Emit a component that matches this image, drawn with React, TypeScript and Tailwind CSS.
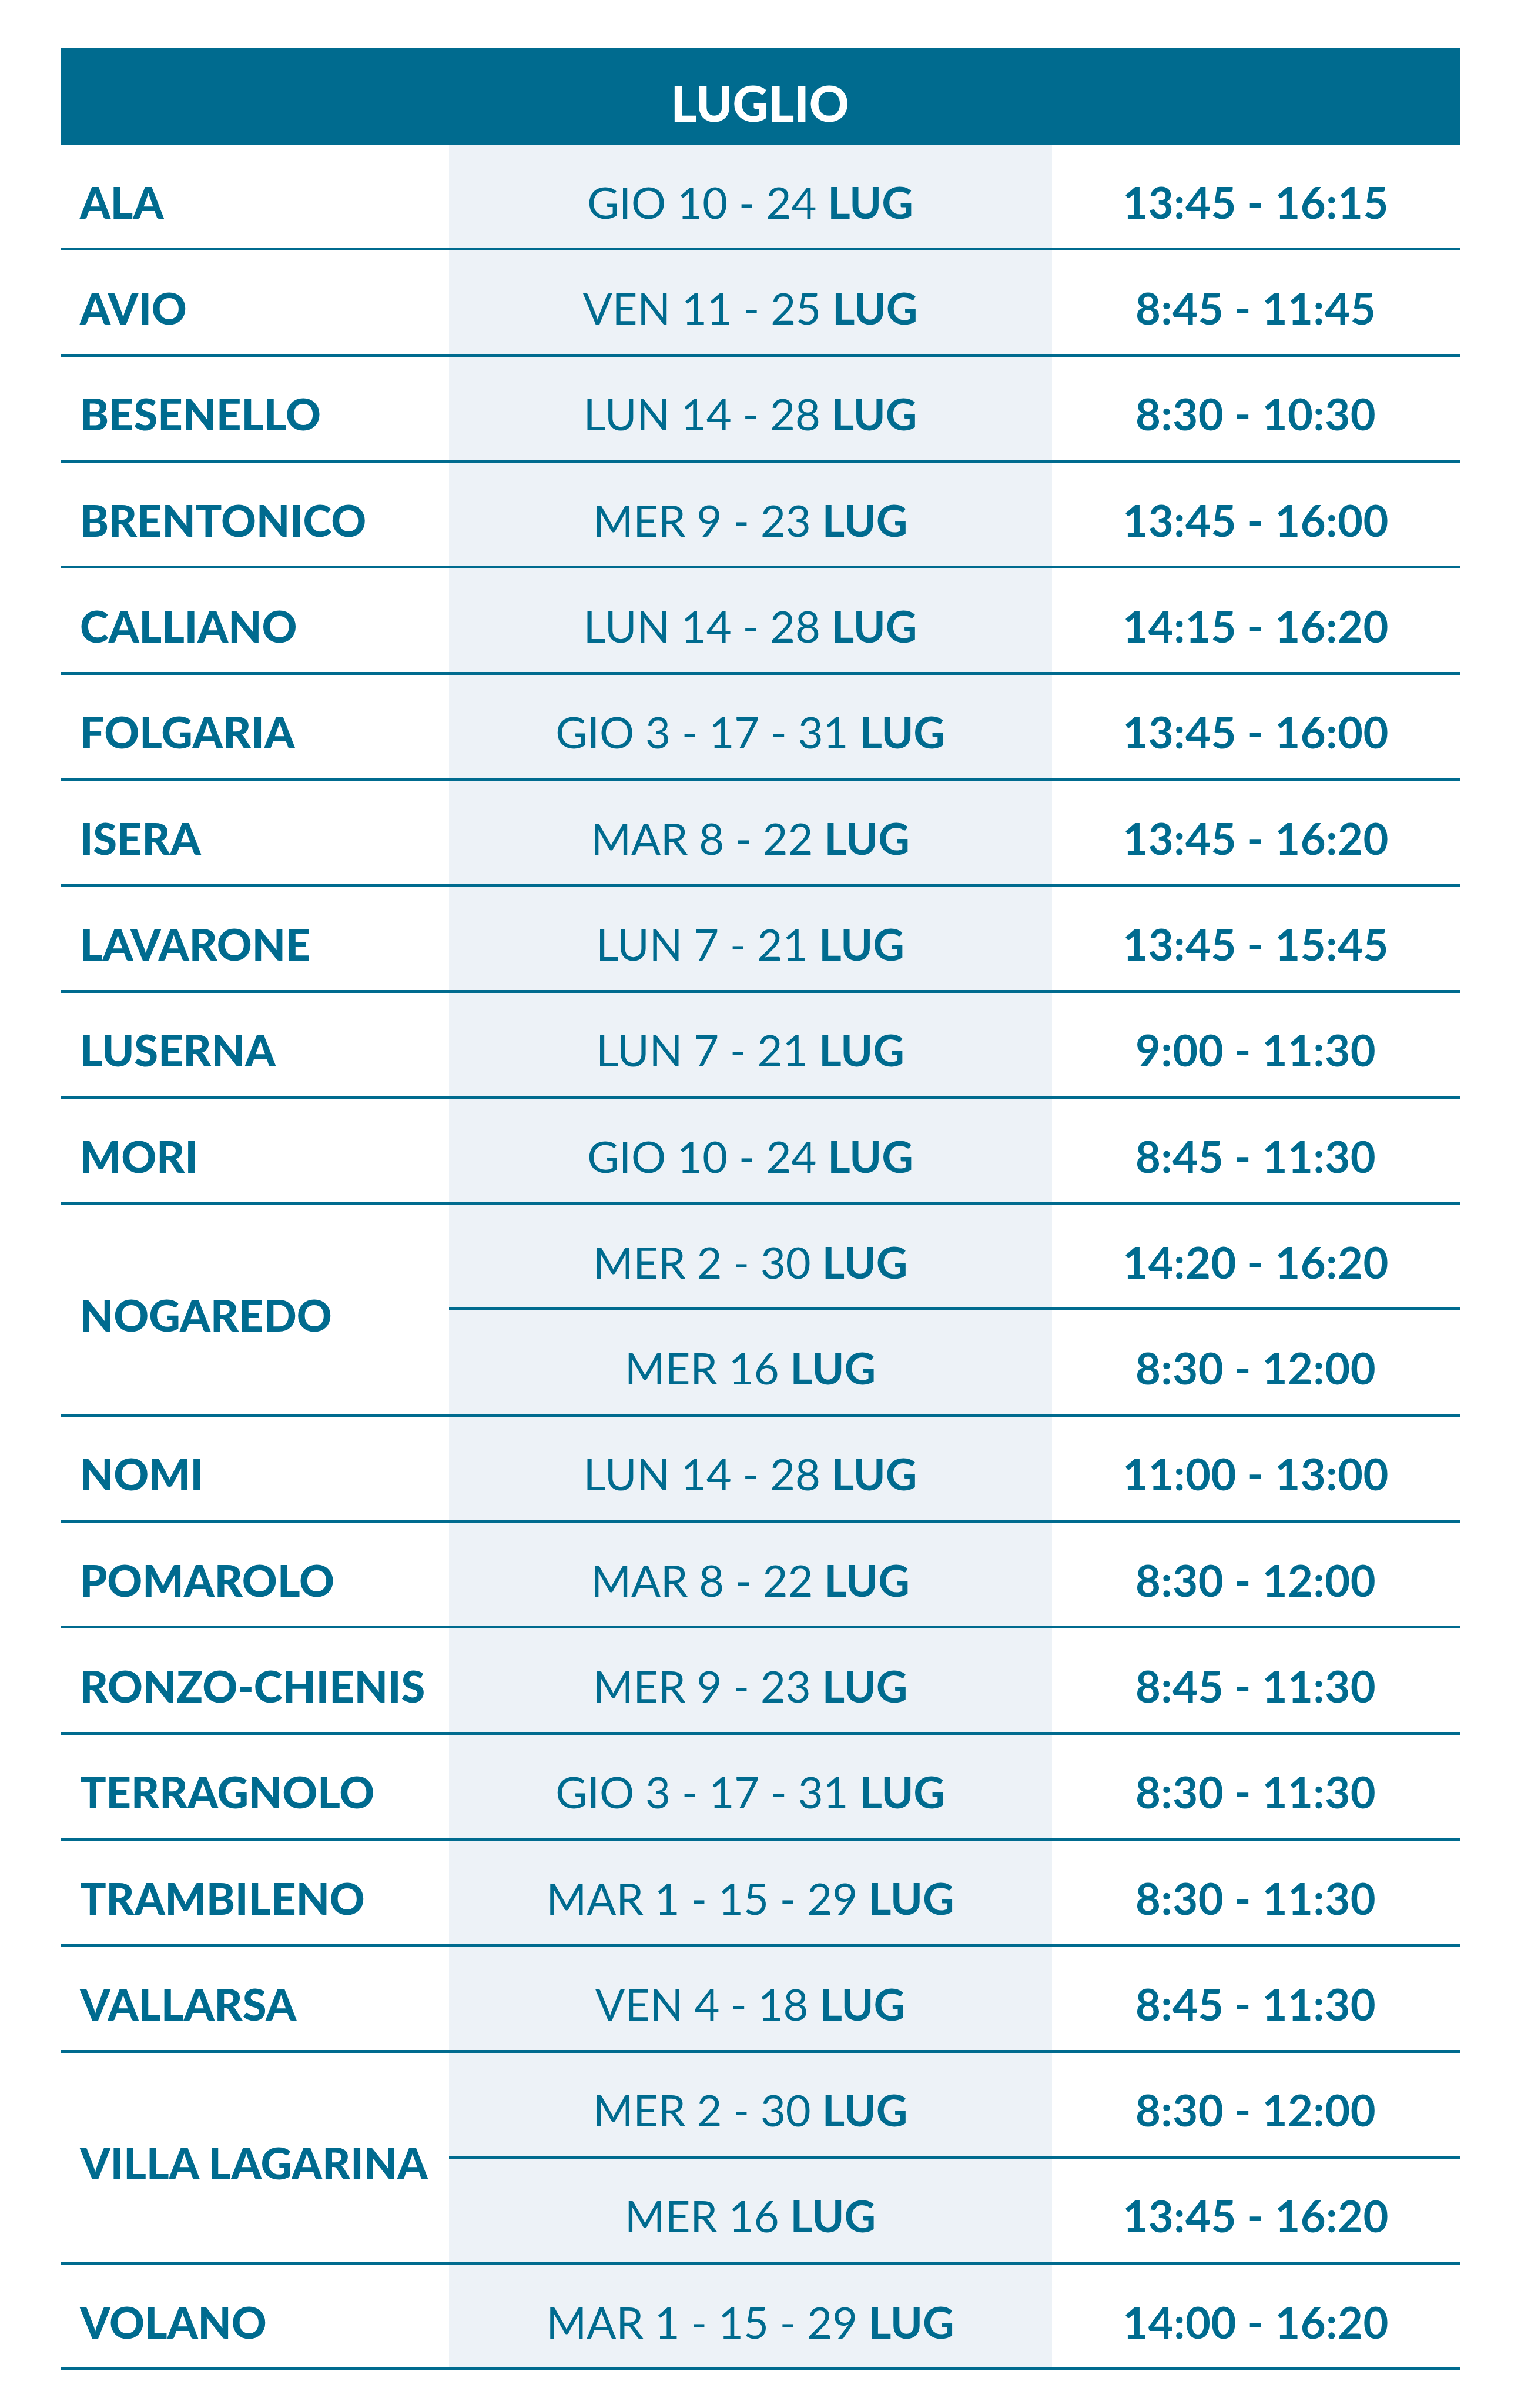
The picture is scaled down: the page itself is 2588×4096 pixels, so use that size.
import React from "react";

type Slot = { d: string; t: string };
type Entry = { town: string; slots: Slot[] };

const data: Entry[] = [
  { town: "ALA", slots: [{ d: "GIO 10 - 24", t: "13:45 - 16:15" }] },
  { town: "AVIO", slots: [{ d: "VEN 11 - 25", t: "8:45 - 11:45" }] },
  { town: "BESENELLO", slots: [{ d: "LUN 14 - 28", t: "8:30 - 10:30" }] },
  { town: "BRENTONICO", slots: [{ d: "MER 9 - 23", t: "13:45 - 16:00" }] },
  { town: "CALLIANO", slots: [{ d: "LUN 14 - 28", t: "14:15 - 16:20" }] },
  { town: "FOLGARIA", slots: [{ d: "GIO 3 - 17 - 31", t: "13:45 - 16:00" }] },
  { town: "ISERA", slots: [{ d: "MAR 8 - 22", t: "13:45 - 16:20" }] },
  { town: "LAVARONE", slots: [{ d: "LUN 7 - 21", t: "13:45 - 15:45" }] },
  { town: "LUSERNA", slots: [{ d: "LUN 7 - 21", t: "9:00 - 11:30" }] },
  { town: "MORI", slots: [{ d: "GIO 10 - 24", t: "8:45 - 11:30" }] },
  {
    town: "NOGAREDO",
    slots: [
      { d: "MER 2 - 30", t: "14:20 - 16:20" },
      { d: "MER 16", t: "8:30 - 12:00" },
    ],
  },
  { town: "NOMI", slots: [{ d: "LUN 14 - 28", t: "11:00 - 13:00" }] },
  { town: "POMAROLO", slots: [{ d: "MAR 8 - 22", t: "8:30 - 12:00" }] },
  { town: "RONZO-CHIENIS", slots: [{ d: "MER 9 - 23", t: "8:45 - 11:30" }] },
  { town: "TERRAGNOLO", slots: [{ d: "GIO 3 - 17 - 31", t: "8:30 - 11:30" }] },
  { town: "TRAMBILENO", slots: [{ d: "MAR 1 - 15 - 29", t: "8:30 - 11:30" }] },
  { town: "VALLARSA", slots: [{ d: "VEN 4 - 18", t: "8:45 - 11:30" }] },
  {
    town: "VILLA LAGARINA",
    slots: [
      { d: "MER 2 - 30", t: "8:30 - 12:00" },
      { d: "MER 16", t: "13:45 - 16:20" },
    ],
  },
  { town: "VOLANO", slots: [{ d: "MAR 1 - 15 - 29", t: "14:00 - 16:20" }] },
];

function SlotRow({ s, last }: { s: Slot; last: boolean }) {
  return (
    <div
      className={
        last
          ? "flex h-[175.3px]"
          : "flex h-[180.3px] border-b-[5px] border-[#006b8f]"
      }
    >
      <div className="flex w-[1026.1px] items-center justify-center bg-[#edf2f7] pt-[20px] text-[74px] leading-none whitespace-nowrap">
        <span className="font-normal">{s.d}&nbsp;</span>
        <span className="font-bold">LUG</span>
      </div>
      <div className="flex flex-1 items-center justify-center pt-[20px] text-[74px] font-bold leading-none tracking-[0.6px] whitespace-nowrap">
        {s.t}
      </div>
    </div>
  );
}

export default function App() {
  return (
    <div
      className="w-[2588px] h-[4096px] bg-white text-[#006b8f]"
      style={{ fontFamily: "Lato, 'Noto Sans', sans-serif" }}
    >
      <div className="pt-[81px] pl-[102.9px]">
        <div className="w-[2380.7px]">
          <div className="flex h-[165.2px] items-center justify-center bg-[#006b8f] pt-[22px] text-[84px] font-black leading-none text-white">
            LUGLIO
          </div>
          {data.map((e) => (
            <div
              key={e.town}
              className="flex border-b-[5px] border-[#006b8f]"
            >
              <div className="flex w-[660.7px] items-center pl-[33px] pt-[20px] text-[74px] font-black leading-none whitespace-nowrap">
                {e.town}
              </div>
              <div className="flex flex-1 flex-col">
                {e.slots.map((s, i) => (
                  <SlotRow key={i} s={s} last={i === e.slots.length - 1} />
                ))}
              </div>
            </div>
          ))}
        </div>
      </div>
    </div>
  );
}
